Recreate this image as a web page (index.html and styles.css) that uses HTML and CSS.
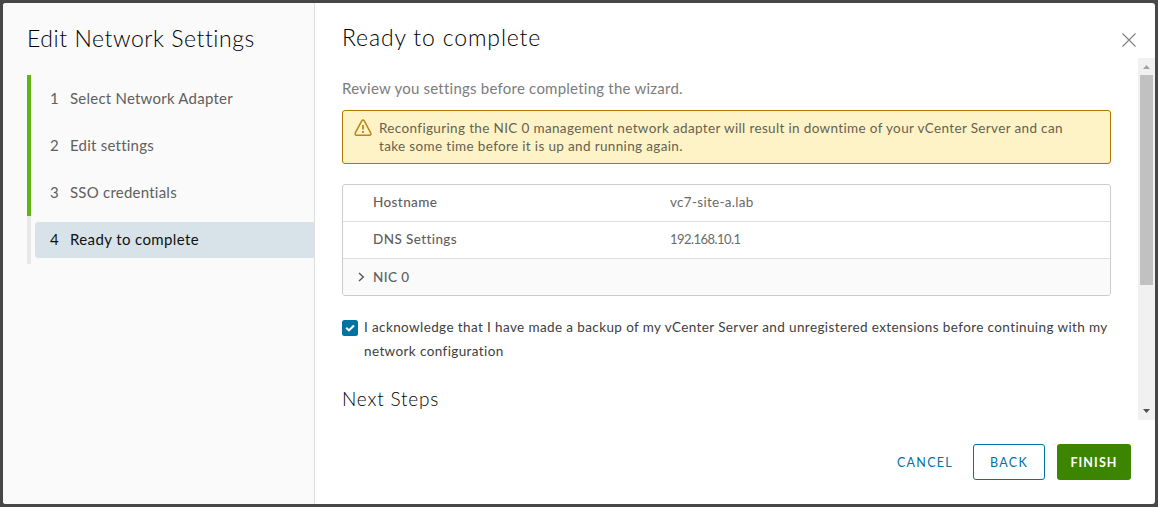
FILE: index.html
```
<!DOCTYPE html>
<html lang="en">
<head>
<meta charset="utf-8">
<title>Edit Network Settings</title>
<link rel="stylesheet" href="styles.css">
</head>
<body>
<div class="modal">
  <aside class="sidebar">
    <h1 class="wizard-title"><span>Edit Network Settings</span></h1>
    <ol class="steps">
      <li class="step done"><div class="step-link"><span class="num">1</span><span>Select Network Adapter</span></div></li>
      <li class="step done"><div class="step-link"><span class="num">2</span><span>Edit settings</span></div></li>
      <li class="step done"><div class="step-link"><span class="num">3</span><span>SSO credentials</span></div></li>
      <li class="step current"><div class="step-link"><span class="num">4</span><span>Ready to complete</span></div></li>
    </ol>
  </aside>
  <main class="main">
    <header class="head">
      <h2 class="page-title"><span>Ready to complete</span></h2>
      <svg class="close" width="16" height="16" viewBox="0 0 16 16"><path d="M1.5 1.5 14.5 14.5M14.5 1.5 1.5 14.5" fill="none" stroke="#808080" stroke-width="1.1"/></svg>
    </header>
    <div class="body">
      <div class="content">
        <p class="intro"><span>Review you settings before completing the wizard.</span></p>
        <div class="alert">
          <svg class="warn" width="18" height="18" viewBox="0 0 18 18"><path d="M7.7 1.9 1.2 14.1Q.6 16.2 2.6 16.2H15.4Q17.4 16.2 16.8 14.1L10.3 1.9Q9 .1 7.7 1.9Z" fill="none" stroke="#b8851a" stroke-width="1.5"/><path d="M9 6V10.6M9 12V13.9" stroke="#b8851a" stroke-width="1.8"/></svg>
          <div class="alert-text"><span>Reconfiguring the NIC 0 management network adapter will result in downtime of your vCenter Server and can</span><br><span>take some time before it is up and running again.</span></div>
        </div>
        <div class="stack">
          <div class="row"><div class="key"><span>Hostname</span></div><div class="val"><span>vc7-site-a.lab</span></div></div>
          <div class="row"><div class="key"><span>DNS Settings</span></div><div class="val"><span class="address">192.168.10.1</span></div></div>
          <div class="row group"><div class="key"><svg class="caret" width="7" height="10" viewBox="0 0 7 10"><path d="M1 1 5.3 5 1 9" fill="none" stroke="#565656" stroke-width="1.4"/></svg><span>NIC 0</span></div></div>
        </div>
        <label class="ack">
          <svg class="box" width="16" height="16" viewBox="0 0 16 16"><rect width="16" height="16" rx="2.5" fill="#0072a3"/><path d="M4.2 7.8 6.9 10.4 12 5.4" fill="none" stroke="#fff" stroke-width="2.1"/></svg>
          <span class="ack-text"><span>I acknowledge that I have made a backup of my vCenter Server and unregistered extensions before continuing with my</span><br><span>network configuration</span></span>
        </label>
        <h3 class="next"><span>Next Steps</span></h3>
      </div>
      <div class="scrollbar">
        <svg width="17" height="17" viewBox="0 0 17 17"><path d="M5 11H12L8.5 7Z" fill="#a3a3a3"/></svg>
        <div class="thumb"></div>
        <svg width="17" height="17" viewBox="0 0 17 17"><path d="M5 6H12L8.5 10Z" fill="#505050"/></svg>
      </div>
    </div>
    <footer class="foot">
      <button class="btn cancel"><span>CANCEL</span></button>
      <button class="btn back"><span>BACK</span></button>
      <button class="btn finish"><span>FINISH</span></button>
    </footer>
  </main>
</div>
</body>
</html>
```
FILE: styles.css
```
* { box-sizing: border-box; }
body { margin: 0; padding: 3px; height: 507px; overflow: hidden; background: #474747; font-family: Lato, "Open Sans", sans-serif; font-size: 13.5px; color: #565656; }
h1, h2, h3, p, ol { margin: 0; padding: 0; font-weight: 400; }
span { white-space: nowrap; }
.modal { display: flex; width: 1152px; height: 501px; border-radius: 3px; background: #fff; overflow: hidden; }
.sidebar { width: 312px; background: #fafafa; border-right: 1px solid #dedede; padding: 20px 0 0 24px; }
.wizard-title { font-size: 23px; line-height: 30px; height: 52px; color: #000; font-weight: 300; letter-spacing: .55px; }
.steps { list-style: none; }
.step { height: 47px; border-left: 4px solid #60b515; padding: 6px 0 0 4px; }
.step-link { display: flex; align-items: center; height: 36px; padding: 0 0 2px 15px; font-size: 15px; letter-spacing: .23px; border-radius: 3px 0 0 3px; color: #606060; }
.step.current { height: 48px; border-color: #e8e8e8; }
.current .step-link { background: #d8e3e9; color: #111; letter-spacing: .38px; }
.num { width: 20px; letter-spacing: 0; }
.main { flex: 1; display: flex; flex-direction: column; }
.head { height: 55px; display: flex; justify-content: space-between; padding: 19px 18px 0 27px; }
.page-title { font-size: 23px; line-height: 30px; color: #000; font-weight: 300; letter-spacing: .85px; }
.close { margin-top: 10px; }
.body { display: flex; height: 362px; }
.content { flex: 1; padding: 20px 27px 0; overflow: hidden; }
.intro { font-size: 15px; line-height: 20px; height: 32px; color: #7c7c7c; letter-spacing: .23px; }
.alert { display: flex; width: 769px; height: 54px; border: 1px solid #ad7600; border-radius: 3px; background: #fef3c7; padding: 8px 11px; color: #666250; }
.warn { margin-right: 7px; }
.alert-text { line-height: 18px; letter-spacing: .35px; }
.stack { width: 769px; height: 112px; margin-top: 20px; border: 1px solid #ccc; border-radius: 3px; overflow: hidden; }
.row { display: flex; height: 37px; line-height: 35px; border-bottom: 1px solid #dedede; }
.row:last-child { height: 36px; border: 0; background: #fafafa; }
.key { width: 327px; padding-left: 30px; font-weight: 500; letter-spacing: .4px; color: #606060; }
.val { letter-spacing: .3px; color: #6a6a6a; }
.address { font-size: 13px; letter-spacing: -.55px; }
.group .key { display: flex; align-items: center; padding-left: 15px; }
.caret { margin-right: 8px; }
.ack { display: flex; margin-top: 20px; color: #404040; line-height: 24px; letter-spacing: .39px; }
.box { margin: 4px 6px 0 0; }
.ack-text { margin-top: -1px; }
.next { margin-top: 22px; font-size: 19px; line-height: 28px; letter-spacing: .8px; color: #000; font-weight: 300; }
.scrollbar { width: 17px; height: 362px; background: #f1f1f1; display: flex; flex-direction: column; }
.scrollbar svg { display: block; }
.thumb { width: 13px; height: 210px; margin: 0 2px auto; background: #c1c1c1; }
.foot { display: flex; justify-content: flex-end; padding: 24px 24px 0 0; }
.btn { height: 36px; padding: 0; border: 1px solid transparent; border-radius: 3px; background: none; font: 400 12.5px Lato, sans-serif; letter-spacing: 1.3px; color: #0072a3; }
.cancel { width: 72px; margin-right: 12px; }
.back { width: 72px; border-color: #0072a3; margin-right: 12px; }
.finish { width: 74px; background: #3c8500; color: #fff; font-weight: 700; letter-spacing: 1.1px; }
```
